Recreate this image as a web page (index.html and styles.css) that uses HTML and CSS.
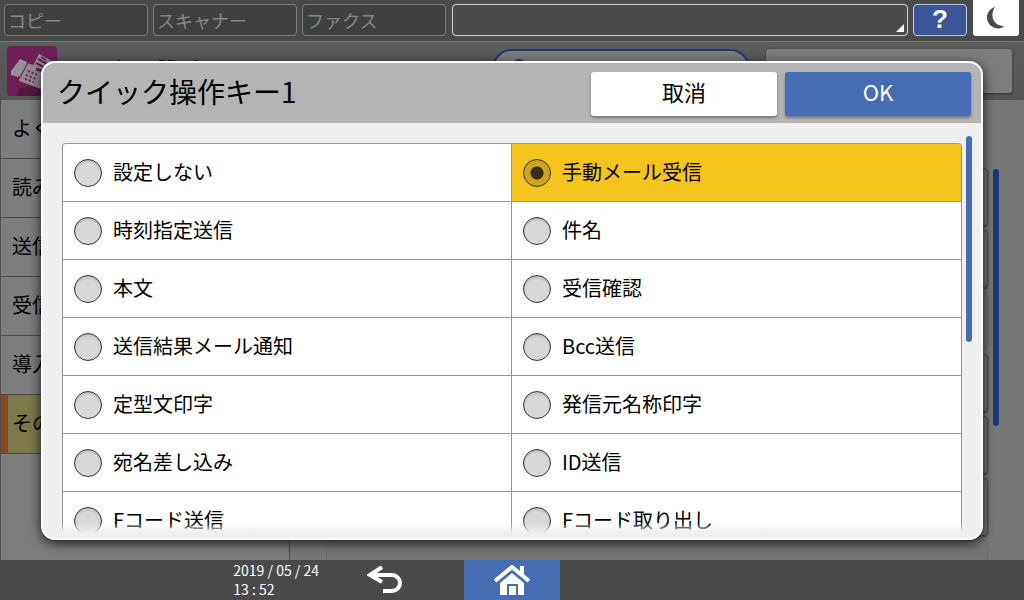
FILE: index.html
```html
<!DOCTYPE html>
<html lang="ja">

<head>
  <meta charset="UTF-8" />
  <title>クイック操作キー1</title>
  <link rel="stylesheet" href="styles.css">
</head>

<body>

  <header class="topbar">
    <button class="tab" type="button">コピー</button>
    <button class="tab" type="button">スキャナー</button>
    <button class="tab" type="button">ファクス</button>
    <div class="message"></div>
    <button class="help" type="button">?</button>
    <button class="sleep" type="button" aria-label="スリープ">
      <svg width="18" height="24" viewBox="0 0 18 24"><path d="M8 1C-1 4-2 14 3 19C7 23 13 24 17 20C7 20 2 10 8 1Z" fill="#4a4a4b" /></svg>
    </button>
  </header>

  <div class="titlebar">
    <svg class="fax-icon" width="50" height="50" viewBox="0 0 50 50">
      <rect width="50" height="50" rx="4" fill="#6f1f56" />
      <path d="M12 43L50 34V50H10Z" fill="#551641" />
      <path d="M25 22L32 8L47 16L44 31Z" fill="#918b90" />
      <path d="M31 13L42 19M29 17L40 23M34 11L39 14" stroke="#6f1f56" stroke-width="2" />
      <path d="M12 27L20 17L50 26V37L34 43L12 35Z" fill="#8f8a8e" />
      <path d="M4 25L13 13L20 16L11 31L4 29Z" fill="#969196" />
      <path d="M12 33L21 17" stroke="#5a2049" stroke-width="1" />
      <path d="M21 25L31 29M19 29L29 33M18 33L27 36" stroke="#6f1f56" stroke-width="2" stroke-dasharray="2 2" />
      <path d="M29 23L36 25" stroke="#6f1f56" stroke-width="3" />
    </svg>
    <svg class="title-marks" width="140" height="3" viewBox="0 0 140 3"><path d="M53 1h2M94 1h6M103 1h7M129 1h3" stroke="#161616" stroke-width="2" /></svg>
    <div class="pill"><span class="pill-dot"></span></div>
    <div class="side-button"></div>
  </div>

  <main class="workspace">
    <nav class="sidebar">
      <button class="side-item" type="button">よく</button>
      <button class="side-item" type="button">読み</button>
      <button class="side-item" type="button">送信</button>
      <button class="side-item" type="button">受信</button>
      <button class="side-item" type="button">導入</button>
      <button class="side-item current" type="button">その</button>
    </nav>
    <div class="panel">
      <div class="cards">
        <div class="card"></div>
        <div class="card"></div>
        <div class="card faint"></div>
        <div class="card"></div>
        <div class="card"></div>
        <div class="card"></div>
        <div class="card faint"></div>
      </div>
      <div class="panel-scroll"></div>
    </div>
  </main>

  <footer class="bottombar">
    <div class="bottom-left">
      <div class="clock">
        <div>2019 / 05 / 24</div>
        <div>13 : 52</div>
      </div>
      <button class="back" type="button" aria-label="戻る">
        <svg width="36" height="28" viewBox="0 0 36 28"><path d="M15 1L3 9L15 16M3 9H25A8 8 0 0 1 25 25H16" fill="none" stroke="#fff" stroke-width="4" /></svg>
      </button>
    </div>
    <button class="home" type="button" aria-label="ホーム">
      <svg width="38" height="31" viewBox="0 0 38 31">
        <path d="M27 1H31V12L27 9Z" fill="#fff" />
        <path d="M7 18L19 8L31 18V30H25V19H14V30H7Z" fill="#fff" />
        <path d="M16 21H23V30H16Z" fill="#fff" />
        <path d="M2 17L19 3L36 17" fill="none" stroke="#466cb4" stroke-width="6" />
        <path d="M27 1H31V12L27 9Z" fill="#fff" />
        <path d="M2 16L19 2L36 16" fill="none" stroke="#fff" stroke-width="4" />
      </svg>
    </button>
  </footer>

  <form class="dialog" role="dialog" aria-labelledby="dialog-title">
    <div class="dialog-header">
      <h1 id="dialog-title">クイック操作キー1</h1>
      <button class="button" type="button">取消</button>
      <button class="button primary" type="button">OK</button>
    </div>
    <div class="dialog-body">
      <div class="options">
        <label class="option"><input type="radio" name="key">設定しない</label>
        <label class="option"><input type="radio" name="key" checked>手動メール受信</label>
        <label class="option"><input type="radio" name="key">時刻指定送信</label>
        <label class="option"><input type="radio" name="key">件名</label>
        <label class="option"><input type="radio" name="key">本文</label>
        <label class="option"><input type="radio" name="key">受信確認</label>
        <label class="option"><input type="radio" name="key">送信結果メール通知</label>
        <label class="option"><input type="radio" name="key">Bcc送信</label>
        <label class="option"><input type="radio" name="key">定型文印字</label>
        <label class="option"><input type="radio" name="key">発信元名称印字</label>
        <label class="option"><input type="radio" name="key">宛名差し込み</label>
        <label class="option"><input type="radio" name="key">ID送信</label>
        <label class="option"><input type="radio" name="key">Fコード送信</label>
        <label class="option"><input type="radio" name="key">Fコード取り出し</label>
      </div>
      <div class="fade"></div>
      <div class="dialog-scroll"></div>
    </div>
  </form>

</body>

</html>
```
FILE: styles.css
```css
* {
  box-sizing: border-box;
}

body {
  margin: 0;
  height: 100vh;
  display: flex;
  flex-direction: column;
  overflow: hidden;
  position: relative;
  background: #4a4a4b;
  color: #000;
  font-family: "Noto Sans CJK JP", sans-serif;
  font-size: 20px;
}

button {
  font: inherit;
  margin: 0;
  padding: 0;
  border: none;
  cursor: pointer;
}

svg {
  display: block;
}

/* top bar */
.topbar {
  display: flex;
  gap: 5px;
  height: 42px;
  padding: 4px 5px 5px 4px;
  border-bottom: 1px solid #757575;
}

.tab {
  width: 144px;
  height: 32px;
  padding: 0 3px;
  border: 1px solid #7e807f;
  border-radius: 4px;
  background: #3f4140;
  color: #858786;
  font-size: 18px;
  line-height: 26px;
  text-align: left;
}

.message {
  position: relative;
  flex: 1;
  height: 32px;
  margin-left: 1px;
  border: 1px solid #d0d0d0;
  border-radius: 4px;
}

.message::after {
  content: "";
  position: absolute;
  right: 3px;
  bottom: 3px;
  border-left: 8px solid transparent;
  border-bottom: 8px solid #fff;
}

.help {
  width: 54px;
  height: 32px;
  padding-bottom: 2px;
  border: 1px solid #c4c8d2;
  border-radius: 4px;
  background: #3b5698;
  color: #fff;
  font-family: "Liberation Sans", sans-serif;
  font-size: 26px;
  font-weight: 700;
  line-height: 28px;
}

.sleep {
  display: flex;
  align-items: center;
  justify-content: center;
  width: 46px;
  height: 36px;
  margin: -4px 0 0 1px;
  border-radius: 0 0 3px 3px;
  background: #fff;
}

/* screen behind the dialog */
.titlebar {
  display: flex;
  align-items: flex-start;
  height: 58px;
  padding: 4px 12px 0 7px;
  background: linear-gradient(#5a5c5b, #535556);
}

.title-marks {
  margin: 14px 0 0 8px;
}

.pill {
  width: 258px;
  height: 46px;
  margin: 3px 16px 0 auto;
  padding: 8px 16px;
  border: 2px solid #1d3973;
  border-radius: 20px;
  background: #7d7d7d;
}

.pill-dot {
  display: block;
  width: 18px;
  height: 18px;
  border-radius: 50%;
  background: #1d3973;
}

.side-button {
  width: 246px;
  height: 44px;
  margin-top: 3px;
  border-radius: 3px;
  background: #7d7d7d;
  box-shadow: 0 1px 3px #333;
}

.workspace {
  display: flex;
  flex: 1;
  min-height: 0;
  background: #767877;
}

.sidebar {
  width: 290px;
  border-left: 1px solid #4e4e4e;
  border-right: 1px solid #4e4e4e;
  background: #7d7d7d;
}

.side-item {
  display: block;
  width: 100%;
  height: 59px;
  padding: 0 0 4px 11px;
  border-bottom: 1px solid #4b4b4b;
  background: #7d7d7d;
  text-align: left;
}

.side-item.current {
  padding-left: 4px;
  border-left: 7px solid #854722;
  background: #7c7849;
}

.panel {
  display: flex;
  flex: 1;
  gap: 5px;
  padding: 68px 25px 0 36px;
  overflow: hidden;
}

.cards {
  display: flex;
  flex: 1;
  flex-direction: column;
  gap: 4px;
}

.card {
  flex: none;
  height: 58px;
  border: 1px solid #4c4c4c;
  border-radius: 4px;
  background: #747474;
  box-shadow: 0 1px 2px #444;
}

.card.faint {
  border-color: #6b6c6b;
  background: #747675;
  box-shadow: none;
}

.panel-scroll {
  width: 6px;
  height: 257px;
  margin-top: 1px;
  border-radius: 3px;
  background: #1d3973;
}

/* bottom bar */
.bottombar {
  display: grid;
  grid-template-columns: 1fr 96px 1fr;
  height: 40px;
}

.bottom-left {
  display: flex;
  align-items: center;
  justify-content: flex-end;
  gap: 48px;
  padding-right: 61px;
}

.clock {
  color: #fff;
  font-size: 14px;
  line-height: 19px;
  white-space: nowrap;
}

.back {
  background: none;
}

.home {
  display: flex;
  justify-content: center;
  padding-top: 5px;
  background: #466cb4;
}

/* dialog */
.dialog {
  position: absolute;
  inset: 61px 41px 60px 41px;
  display: flex;
  flex-direction: column;
  overflow: hidden;
  border: 2px solid #fff;
  border-radius: 14px;
  background: #efefef;
  box-shadow: 0 3px 12px rgba(0, 0, 0, 0.8);
}

.dialog-header {
  display: flex;
  align-items: flex-start;
  gap: 8px;
  height: 60px;
  padding: 9px 10px 0 14px;
  background: #b4b4b4;
}

.dialog-header h1 {
  flex: 1;
  margin: 0;
  font-size: 28px;
  font-weight: 400;
  line-height: 38px;
}

.button {
  width: 186px;
  height: 44px;
  padding-bottom: 6px;
  border-radius: 3px;
  background: #fff;
  box-shadow: 0 2px 3px #777;
  color: #000;
  font-size: 22px;
}

.button.primary {
  background: #466cb4;
  color: #fff;
}

.dialog-body {
  position: relative;
  flex: 1;
  min-height: 0;
  padding: 20px 19px 5px;
}

.options {
  display: grid;
  grid-template-columns: 1fr 1fr;
  grid-auto-rows: 58px;
  height: 100%;
  overflow: hidden;
  border: 1px solid #959595;
  border-bottom: none;
  border-radius: 4px 4px 0 0;
  background: #fff;
}

.option {
  display: flex;
  align-items: center;
  gap: 11px;
  padding: 0 0 2px 11px;
  border-bottom: 1px solid #959595;
  line-height: 24px;
}

.option:nth-child(even) {
  margin-left: -1px;
  border-left: 1px solid #959595;
}

.option:has(:checked) {
  background: #f5c41d;
}

.option input {
  appearance: none;
  width: 28px;
  height: 28px;
  margin: 2px 0 0;
  border: 1px solid #333;
  border-radius: 50%;
  background: #d8d8d8;
  box-shadow: inset 0 2px 2px #bbb;
}

.option input:checked {
  background: radial-gradient(circle, #352d1b 6px, #cfa51a 7px);
  box-shadow: none;
}

.fade {
  position: absolute;
  left: 19px;
  right: 19px;
  bottom: 5px;
  height: 10px;
  background: linear-gradient(rgba(239, 239, 239, 0), #efefef);
}

.dialog-scroll {
  position: absolute;
  top: 13px;
  right: 9px;
  width: 6px;
  height: 206px;
  border-radius: 3px;
  background: #466cb4;
}
```
